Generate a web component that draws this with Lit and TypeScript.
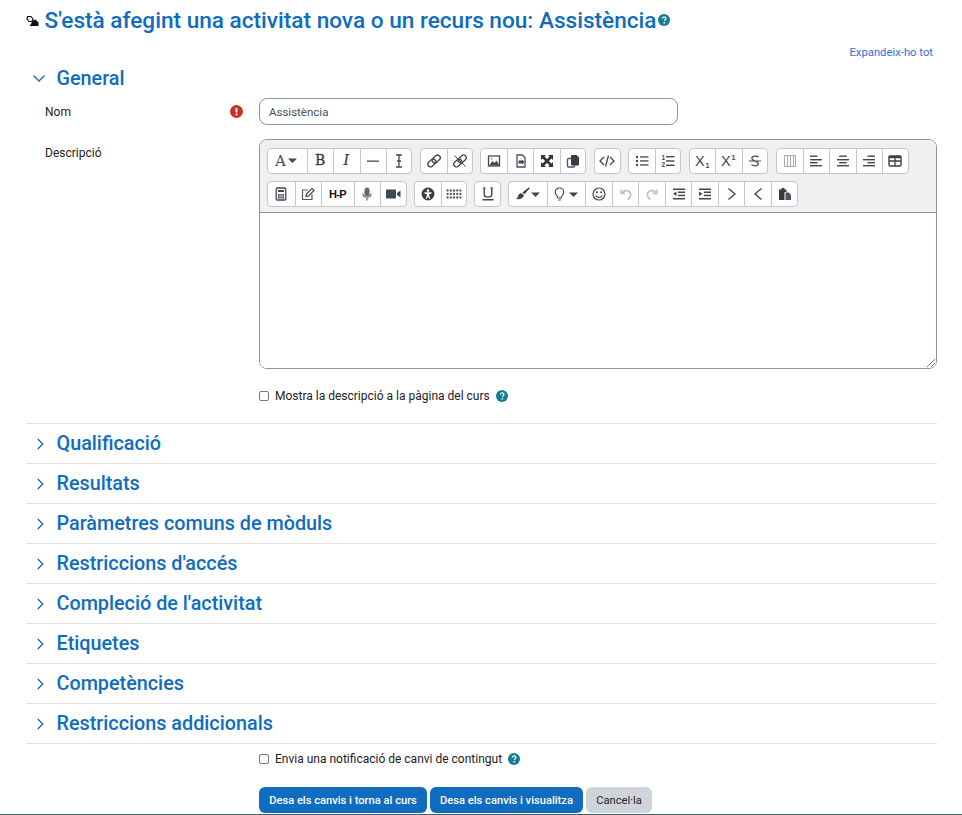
import { LitElement, html, svg, css } from "lit";
import { customElement } from "lit/decorators.js";

const S = (w: number, body: any, h = 14) => html`<svg width=${w} height=${h} viewBox="0 0 ${w} ${h}">${body}</svg>`;
const caret = (x: number, y = 5.5) => svg`<path d="M${x} ${y}h9l-4.500 4.500z" fill="#3f4650" />`;
const ink = "#414852";

const I: Record<string, any> = {
  font: S(24, svg`<text x="0" y="14.500" class="gs" font-size="15">A</text>${caret(13, 7.5)}`, 20),
  bold: S(14, svg`<text x="2" y="13" class="gb" font-size="14">B</text>`, 18),
  italic: S(14, svg`<text x="3.500" y="13" class="gi" font-size="14">I</text>`, 18),
  hr: S(14, svg`<rect x="1" y="6.500" width="12" height="1.300" fill=${ink} />`),
  clear: S(14, svg`<path d="M4 1h6M7 1v12M4 13h6M5 7h4" stroke=${ink} stroke-width="1.300" fill="none" />`),
  link: S(16, svg`<g fill="none" stroke=${ink} stroke-width="1.400" transform="rotate(-42 8 7)"><rect x="0.500" y="4.300" width="9" height="5.400" rx="2.700" /><rect x="6.500" y="4.300" width="9" height="5.400" rx="2.700" /></g>`),
  unlink: S(16, svg`<g fill="none" stroke=${ink} stroke-width="1.300" transform="rotate(-42 8 7)"><rect x="0.500" y="4.300" width="9" height="5.400" rx="2.700" /><rect x="6.500" y="4.300" width="9" height="5.400" rx="2.700" /></g><path d="M2.500 1.500l11 11" stroke=${ink} stroke-width="1" />`),
  image: S(14, svg`<rect x="1.500" y="2" width="11" height="10" fill="none" stroke=${ink} stroke-width="1.300" /><path d="M2 11.500L5.500 7l2 2 2-2.500 3 5z" fill=${ink} /><circle cx="4.500" cy="4.800" r="1" fill="#5fb4d8" />`),
  file: S(14, svg`<path d="M3 1h5.500L11 3.500V13H3z" fill="none" stroke="#5c4668" stroke-width="1.300" /><path d="M4.500 6.500h3.500V5.500l2.500 2.500-2.500 2.500V9.500H4.500z" fill=${ink} />`),
  expand: S(14, svg`<path fill="#2f353c" d="M1 1h5L1 6zM13 1v5L8 1zM1 13V8l5 5zM13 13H8l5-5z" /><path d="M3 3l8 8M11 3l-8 8" stroke="#2f353c" stroke-width="2.600" />`),
  copy: S(14, svg`<rect x="1.500" y="4.500" width="7" height="8.500" rx="1" fill="none" stroke="#44566e" stroke-width="1.300" /><path d="M5.500 1h5L13 3.500v7a1 1 0 0 1-1 1H6a1 1 0 0 1-1-1V2z" fill="#363c44" />`),
  code: S(16, svg`<path d="M5 3L1 7l4 4M11 3l4 4-4 4M9.500 1.500L6.500 12.500" fill="none" stroke=${ink} stroke-width="1.300" />`),
  ul: S(14, svg`<g fill=${ink}><circle cx="2" cy="3" r="1.200" /><circle cx="2" cy="7" r="1.200" /><circle cx="2" cy="11" r="1.200" /><rect x="5" y="2.300" width="8.500" height="1.300" /><rect x="5" y="6.300" width="8.500" height="1.300" /><rect x="5" y="10.300" width="8.500" height="1.300" /></g>`),
  ol: S(14, svg`<text x="0.500" y="6" class="gr" font-size="6.500" font-weight="700">1</text><text x="0.500" y="13" class="gr" font-size="6.500" font-weight="700">2</text><g fill=${ink}><rect x="5" y="2" width="8.500" height="1.400" /><rect x="5" y="6.300" width="8.500" height="1.400" /><rect x="5" y="10.600" width="8.500" height="1.400" /></g>`),
  sub: S(16, svg`<text x="0" y="14.500" class="gr" font-size="14.500">X</text><text x="10.500" y="16.500" class="gr" font-size="7" font-weight="700">1</text>`, 20),
  sup: S(16, svg`<text x="0" y="15" class="gr" font-size="14.500">X</text><text x="10.500" y="9" class="gr" font-size="7" font-weight="700">1</text>`, 20),
  strike: S(14, svg`<path d="M10.500 3.200C9.500 1.800 4 1.300 3.800 4c-.1 1.500 1.500 2.300 3.200 3 2 .8 3.600 1.500 3.300 3.100-.4 2.300-5.700 2-6.800.5M1 7h12" fill="none" stroke=${ink} stroke-width="1.200" />`),
  cols: S(14, svg`<path d="M1.500 1.500h11v11h-11zM4.500 1.500v11M7.500 1.500v11M10.500 1.500v11" fill="none" stroke="#a6a9ad" stroke-width="1" />`),
  left: S(14, svg`<g fill=${ink}><rect x="1" y="1.500" width="7.500" height="1.400" /><rect x="1" y="5" width="12" height="1.400" /><rect x="1" y="8" width="7.500" height="1.400" /><rect x="1" y="11" width="12" height="1.400" /></g>`),
  center: S(14, svg`<g fill=${ink}><rect x="3.200" y="1.500" width="7.500" height="1.400" /><rect x="1" y="5" width="12" height="1.400" /><rect x="3.200" y="8" width="7.500" height="1.400" /><rect x="1" y="11" width="12" height="1.400" /></g>`),
  right: S(14, svg`<g fill=${ink}><rect x="5.500" y="1.500" width="7.500" height="1.400" /><rect x="1" y="5" width="12" height="1.400" /><rect x="5.500" y="8" width="7.500" height="1.400" /><rect x="1" y="11" width="12" height="1.400" /></g>`),
  table: S(14, svg`<rect x="1" y="2" width="12" height="10" rx="1" fill="none" stroke="#38404a" stroke-width="1.400" /><path d="M1 7h12M7 4v8" stroke="#38404a" stroke-width="1.300" /><rect x="1" y="2" width="12" height="2.200" fill="#38404a" />`),
  calc: S(14, svg`<rect x="2.200" y="1" width="9.600" height="12" rx="1" fill="none" stroke=${ink} stroke-width="1.300" /><rect x="4" y="3" width="6" height="2" fill=${ink} /><path d="M4 7h6v4.500H4z" fill=${ink} /><path d="M6 7v4.500M8 7v4.500M4 9.200h6" stroke="#fff" stroke-width=".6" />`),
  edit: S(14, svg`<path d="M11 7.500V12.500H1.500V3H7" fill="none" stroke="#4b5a6e" stroke-width="1.200" /><path d="M5 9.500l.6-2.600L11 1.500l2 2-5.400 5.400z" fill="none" stroke=${ink} stroke-width="1.200" />`),
  h5p: html`<span class="h5p">H-P</span>`,
  mic: S(14, svg`<rect x="4.500" y="0.500" width="5" height="9" rx="2.500" fill="#5b6775" /><path d="M3 6.500c0 5 8 5 8 0M7 11v2.500" fill="none" stroke="#5b6775" stroke-width="1.200" />`),
  video: S(16, svg`<rect x="1" y="2.500" width="10" height="9" rx="1" fill="#3e4754" /><path d="M12 6l3.500-2.500v7L12 8z" fill="#3e4754" />`),
  a11y: S(14, svg`<circle cx="7" cy="7" r="6.400" fill="#353b43" /><circle cx="7" cy="3.600" r="1.300" fill="#fff" /><path d="M3.400 5.200h7.200v1.200L8.300 7v2l1.200 2.800H8.200L7 9.400l-1.200 2.400H4.500L5.700 9V7L3.400 6.400z" fill="#fff" />`),
  dots: S(16, svg`${[3.5, 7, 10.5].flatMap((y) => [1.6, 4.8, 8, 11.2, 14.4].map((x) => svg`<circle cx=${x} cy=${y} r="1.150" fill="#555a62" />`))}`),
  under: S(14, svg`<path d="M3.200 1v6c0 4.200 7.600 4.200 7.600 0V1" fill="none" stroke=${ink} stroke-width="1.400" /><rect x="1.500" y="12" width="11" height="1.500" fill=${ink} /><path d="M1.800 1h3M9.200 1h3" stroke=${ink} stroke-width="1" />`),
  brush: S(25, svg`<path d="M13 .5c.4 0 .8.5.5.9L8.500 7.300 6.400 5.600 12.400.8zM5.600 6.300L8 8.200C7 11.500 3.500 12.800 0 12c2-.7 1.600-2 2.200-3.500C2.800 7 4.400 6 5.600 6.300z" fill="#3a424c" />${caret(15)}`),
  bulb: S(26, svg`<path d="M5.500 1C2.800 1 1.200 3 1.200 5c0 2.400 2.200 3.600 2.800 6h3c.6-2.400 2.800-3.600 2.800-6C9.800 3 8.200 1 5.500 1zM4.200 13h2.600" fill="none" stroke=${ink} stroke-width="1.100" />${caret(15)}`),
  smile: S(14, svg`<circle cx="7" cy="7" r="6" fill="none" stroke=${ink} stroke-width="1.200" /><circle cx="4.900" cy="5.300" r="1" fill=${ink} /><circle cx="9.100" cy="5.300" r="1" fill=${ink} /><path d="M3.800 8.500c1 2.600 5.400 2.600 6.400 0" fill="none" stroke=${ink} stroke-width="1.200" />`),
  undo: S(14, svg`<path d="M2.300 2.500v4h4M3 6.500C4.500 3 9 2.500 11 5.500c1.500 2.300.5 5.500-2.500 7" fill="none" stroke="#bdbfc2" stroke-width="1.700" />`),
  redo: S(14, svg`<path d="M11.700 2.500v4h-4M11 6.500C9.500 3 5 2.500 3 5.500c-1.500 2.300-.5 5.500 2.500 7" fill="none" stroke="#bdbfc2" stroke-width="1.700" />`),
  outdent: S(14, svg`<g fill=${ink}><rect x="1" y="1.500" width="12" height="1.500" /><rect x="6" y="4.500" width="7" height="1.500" /><rect x="6" y="7.700" width="7" height="1.500" /><rect x="1" y="11" width="12" height="1.500" /><path d="M4.500 4.500V9L1 6.800z" /></g>`),
  indent: S(14, svg`<g fill=${ink}><rect x="1" y="1.500" width="12" height="1.500" /><rect x="6" y="4.500" width="7" height="1.500" /><rect x="6" y="7.700" width="7" height="1.500" /><rect x="1" y="11" width="12" height="1.500" /><path d="M1 4.500V9l3.500-2.200z" /></g>`),
  gt: S(14, svg`<path d="M3.500 1.500L10 7l-6.500 5.500" fill="none" stroke=${ink} stroke-width="1.400" />`),
  lt: S(14, svg`<path d="M10.500 1.500L4 7l6.500 5.500" fill="none" stroke=${ink} stroke-width="1.400" />`),
  paste: S(14, svg`<path d="M1 2.500h2.500V1h3v1.500h2V5H6.500v8H1z" fill="#353b43" /><path d="M7.500 5.500h3.500L13 8v5H7.500z" fill="#4b5563" />`),
};

type Btn = [string, number];
const row1: Btn[][] = [
  [["font", 39.5], ["bold", 26], ["italic", 27], ["hr", 26], ["clear", 26.5]],
  [["link", 27], ["unlink", 26]],
  [["image", 26.5], ["file", 26.5], ["expand", 26.5], ["copy", 26.5]],
  [["code", 26.5]],
  [["ul", 27], ["ol", 26]],
  [["sub", 26.5], ["sup", 26.5], ["strike", 26]],
  [["cols", 27], ["left", 26], ["center", 27], ["right", 26], ["table", 27.5]],
];
const row2: Btn[][] = [
  [["calc", 27.5], ["edit", 26], ["h5p", 33], ["mic", 26], ["video", 27.5]],
  [["a11y", 27], ["dots", 26.5]],
  [["under", 27]],
  [["brush", 39.5], ["bulb", 38], ["smile", 27], ["undo", 26], ["redo", 27], ["outdent", 26], ["indent", 27], ["gt", 26], ["lt", 27], ["paste", 26.5]],
];

const sections = ["Qualificació", "Resultats", "Paràmetres comuns de mòduls", "Restriccions d'accés", "Compleció de l'activitat", "Etiquetes", "Competències", "Restriccions addicionals"];

const help = html`<svg class="help" width="12" height="12" viewBox="0 0 12 12"><circle cx="6" cy="6" r="6" fill="#0f7d92" /><path d="M4.200 4.600c0-2.400 3.700-2.300 3.700-.2 0 1.400-1.500 1.300-1.500 2.700" fill="none" stroke="#fff" stroke-width="1.300" /><rect x="5.600" y="8" width="1.500" height="1.500" fill="#fff" /></svg>`;
const chevR = html`<svg width="12" height="12" viewBox="0 0 12 12"><path d="M3.800 1L8.800 6l-5 5" fill="none" stroke="#0f6cbf" stroke-width="1.300" /></svg>`;
const chevD = html`<svg width="14" height="12" viewBox="0 0 14 12"><path d="M1.500 3.500L7 9l5.500-5.500" fill="none" stroke="#0f6cbf" stroke-width="1.300" /></svg>`;

@customElement("app-root")
export class AppRoot extends LitElement {
  static styles = css`
    :host { display: block; position: relative; height: 815px; overflow: hidden; background: #fff; font-family: Roboto, "Liberation Sans", sans-serif; font-size: 12px; color: #1d2125; }
    .page { padding: 0 25px 0 26px; }
    h1 { margin: 0; height: 40px; display: flex; align-items: center; font-size: 22.6px; font-weight: 500; color: #0f6cbf; }
    h1 .ico { width: 18.5px; display: flex; }
    h1 .help { margin-left: 2px; }
    .help { flex: none; }
    .expand { height: 24px; display: flex; align-items: center; justify-content: flex-end; padding-right: 4px; font-size: 11.27px; color: #2f6fcf; }
    .head { display: flex; align-items: center; font-size: 19.8px; font-weight: 500; color: #0f6cbf; }
    .gen { height: 28px; }
    .gen .chev { width: 30.5px; padding-left: 6px; box-sizing: border-box; display: flex; }
    .row { display: flex; padding-left: 19px; }
    .lab { width: 214px; flex: none; display: flex; justify-content: space-between; padding-right: 16px; box-sizing: border-box; }
    .nom { margin-top: 6px; align-items: center; height: 27px; }
    input.txt { box-sizing: border-box; width: 419px; height: 27px; border: 1px solid #8f959e; border-radius: 8px; padding: 0 9px; font: inherit; font-size: 11.5px; color: #495057; }
    .desc { margin-top: 14px; }
    .desc .lab { padding-top: 7px; }
    .editor { box-sizing: border-box; width: 678px; height: 230px; border: 1px solid #8f959e; border-radius: 8px; overflow: hidden; display: flex; flex-direction: column; }
    .bar { background: #f0f0f0; border-bottom: 1px solid #8f959e; padding: 7.5px 0 0 7px; display: flex; flex-direction: column; gap: 7.5px; height: 73px; box-sizing: border-box; flex: none; }
    .tr { display: flex; }
    .r1 { gap: 7.7px; }
    .r2 { gap: 6.8px; }
    .grp { display: flex; height: 26px; box-sizing: border-box; background: #fff; border: 1px solid #c4c7cb; border-radius: 4px; }
    .b { display: flex; align-items: center; justify-content: center; box-sizing: border-box; height: 24px; border-left: 1px solid #c4c7cb; }
    .b:first-child { border-left: 0; }
    .h5p { font: 700 11px "Liberation Sans", sans-serif; color: #111; letter-spacing: -0.7px; }
    .gs { font-family: "DejaVu Serif", serif; fill: #47505b; }
    .gb { font-family: "DejaVu Serif", serif; fill: #333a42; stroke: #333a42; stroke-width: 0.3px; }
    .gi { font-family: "DejaVu Serif", serif; font-style: italic; fill: #333a42; stroke: #333a42; stroke-width: 0.2px; }
    .gr { font-family: "Liberation Sans", sans-serif; fill: #414852; }
    .area { flex: 1; background: #fff; position: relative; }
    .grip { position: absolute; right: 0; bottom: 0; }
    .chk { display: flex; align-items: center; height: 16px; padding-left: 233px; }
    .chk input { appearance: none; margin: 0 6px 0 0; width: 10px; height: 10px; box-sizing: border-box; border: 1px solid #767676; border-radius: 2px; background: #fff; flex: none; }
    .chk .help { margin-left: 6px; }
    .c1 { margin-top: 19px; }
    .list { margin-top: 19px; border-bottom: 1px solid #dee2e6; }
    .sec { height: 40px; box-sizing: border-box; border-top: 1px solid #dee2e6; }
    .sec .chev { width: 30.5px; padding-left: 8px; box-sizing: border-box; display: flex; }
    .c2 { margin-top: 7px; }
    .btns { margin-top: 20px; margin-left: 233px; display: flex; gap: 3px; }
    .btn { height: 26px; display: flex; align-items: center; justify-content: center; border-radius: 6px; font-size: 11.15px; font-weight: 500; background: #0f6cbf; color: #fff; }
    .b1 { width: 168px; } .b2 { width: 153px; }
    .b3 { width: 66px; background: #ced4da; color: #1d2125; font-weight: 400; }
    .foot { position: absolute; left: 0; right: 0; bottom: 0; height: 1px; background: #43606e; }
  `;

  private group(g: Btn[]) {
    return html`<div class="grp">${g.map(([k, w], i) => {
      const trim = (i === 0 ? 1 : 0) + (i === g.length - 1 ? 1 : 0);
      return html`<div class="b" style="width:${w - trim}px">${I[k]}</div>`;
    })}</div>`;
  }

  render() {
    return html`<div class="page">
      <h1><span class="ico"><svg width="13" height="13" viewBox="0 0 13 13"><path d="M1.500 2.500h3.500l2 2.500-1 2.500H3L1 5z" fill="none" stroke="#111" stroke-width="1.200" /><path d="M6.500 6.500l3-1 3 3v3.500H3.500l1.500-2z" fill="#111" /></svg></span>S'està afegint una activitat nova o un recurs nou: Assistència${help}</h1>
      <div class="expand">Expandeix-ho tot</div>
      <div class="head gen"><span class="chev">${chevD}</span>General</div>
      <div class="row nom"><div class="lab"><span>Nom</span><svg width="13" height="13" viewBox="0 0 13 13"><circle cx="6.500" cy="6.500" r="6.500" fill="#ca3120" /><rect x="5.600" y="2.900" width="1.800" height="4.600" fill="#fff" /><rect x="5.600" y="8.500" width="1.800" height="1.800" fill="#fff" /></svg></div><input class="txt" value="Assistència" /></div>
      <div class="row desc"><div class="lab"><span>Descripció</span></div>
        <div class="editor">
          <div class="bar">
            <div class="tr r1">${row1.map((g) => this.group(g))}</div>
            <div class="tr r2">${row2.map((g) => this.group(g))}</div>
          </div>
          <div class="area"><svg class="grip" width="11" height="11" viewBox="0 0 11 11"><path d="M10 2L2 10M10 6l-4 4" stroke="#777" stroke-width="1" /></svg></div>
        </div>
      </div>
      <div class="chk c1"><input type="checkbox" /><span>Mostra la descripció a la pàgina del curs</span>${help}</div>
      <div class="list">${sections.map((s) => html`<div class="head sec"><span class="chev">${chevR}</span>${s}</div>`)}</div>
      <div class="chk c2"><input type="checkbox" /><span>Envia una notificació de canvi de contingut</span>${help}</div>
      <div class="btns"><div class="btn b1">Desa els canvis i torna al curs</div><div class="btn b2">Desa els canvis i visualitza</div><div class="btn b3">Cancel·la</div></div>
    </div><div class="foot"></div>`;
  }
}
